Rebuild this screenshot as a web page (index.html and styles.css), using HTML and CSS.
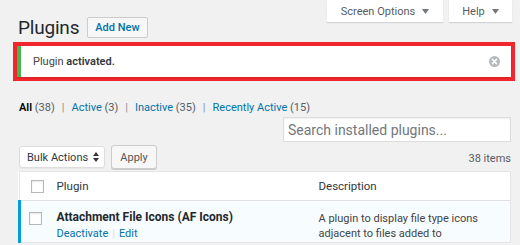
FILE: index.html
```html
<!DOCTYPE html>
<html lang="en">
<head>
<meta charset="utf-8">
<title>Plugins</title>
<link rel="stylesheet" href="styles.css">
</head>
<body>
<div class="wrap">
  <div class="top">
    <div class="heading">
      <h1 class="title">Plugins</h1>
      <a class="btn-add" href="#">Add New</a>
    </div>
    <div class="screen-meta">
      <button class="meta-tab">Screen Options <svg class="caret" width="7" height="5" viewBox="0 0 7 5"><path d="M0 0h7L3.5 5z" fill="#72777c"/></svg></button>
      <button class="meta-tab">Help <svg class="caret" width="7" height="5" viewBox="0 0 7 5"><path d="M0 0h7L3.5 5z" fill="#72777c"/></svg></button>
    </div>
  </div>

  <div class="highlight">
    <div class="notice">
      <p class="notice-text">Plugin <strong>activated.</strong></p>
      <svg class="dismiss" width="11" height="11" viewBox="0 0 11 11"><circle cx="5.5" cy="5.5" r="5.5" fill="#b4b9be"/><path d="M3.4 3.4l4.2 4.2M7.6 3.4l-4.2 4.2" stroke="#fff" stroke-width="1.6" stroke-linecap="round"/></svg>
    </div>
  </div>

  <ul class="filters">
    <li><a class="current" href="#">All <span class="count">(38)</span></a><span class="sep">|</span></li>
    <li><a href="#">Active <span class="count">(3)</span></a><span class="sep">|</span></li>
    <li><a href="#">Inactive <span class="count">(35)</span></a><span class="sep">|</span></li>
    <li><a href="#">Recently Active <span class="count">(15)</span></a></li>
  </ul>

  <div class="search-row">
    <input class="search" type="search" placeholder="Search installed plugins...">
  </div>

  <div class="tablenav">
    <div class="select">Bulk Actions <svg class="updown" width="6" height="10" viewBox="0 0 6 10"><path d="M0 4h6L3 0zM0 6h6L3 10z" fill="#32373c"/></svg></div>
    <button class="btn-apply">Apply</button>
    <span class="items">38 items</span>
  </div>

  <table class="plugins">
    <thead>
      <tr>
        <td class="cb"><span class="checkbox"></span></td>
        <th class="col-name">Plugin</th>
        <th class="col-desc">Description</th>
      </tr>
    </thead>
    <tbody>
      <tr class="active">
        <td class="cb"><span class="checkbox"></span></td>
        <td class="col-name">
          <strong class="plugin-title">Attachment File Icons (AF Icons)</strong>
          <div class="row-actions"><a href="#">Deactivate</a><span class="bar">|</span><a href="#">Edit</a></div>
        </td>
        <td class="col-desc">A plugin to display file type icons<br>adjacent to files added to</td>
      </tr>
    </tbody>
  </table>
</div>
</body>
</html>
```

FILE: styles.css
```css
* { box-sizing: border-box; }

html, body {
  margin: 0;
  background: #f1f1f1;
  font-family: Roboto, "Liberation Sans", sans-serif;
  font-size: 11px;
  color: #444;
}

.wrap {
  padding: 0 9px 0 18px;
  overflow: hidden;
  height: 245px;
}

.top {
  display: flex;
  justify-content: space-between;
  align-items: flex-start;
}

.heading {
  display: flex;
  align-items: center;
  gap: 8px;
  padding-top: 17px;
  height: 38px;
}

.title {
  margin: 0;
  font-size: 19px;
  font-weight: 400;
  color: #23282d;
  letter-spacing: -0.2px;
  line-height: 21px;
}

.btn-add {
  display: flex;
  align-items: center;
  height: 21px;
  padding: 0 7px;
  background: #f7f7f7;
  border: 1px solid #ccc;
  border-radius: 2px;
  color: #0073aa;
  font-weight: 500;
  font-size: 11px;
  text-decoration: none;
}

.screen-meta {
  display: flex;
  gap: 6px;
  margin-right: -1px;
}

.meta-tab {
  display: flex;
  align-items: center;
  justify-content: center;
  gap: 7px;
  height: 22px;
  background: #fff;
  border: none;
  box-shadow: 0 1px 1px rgba(0,0,0,.12);
  font-family: inherit;
  font-size: 11px;
  color: #555d66;
  padding: 0 13px;
}
.meta-tab:first-child { width: 116px; }
.meta-tab:last-child { width: 63px; }

.caret { display: block; }

.highlight {
  margin: 4px -4px 0 -5px;
  border: 4px solid #f0262c;
}

.notice {
  display: flex;
  align-items: center;
  justify-content: space-between;
  height: 31px;
  background: #fff;
  border-left: 4px solid #46b450;
  box-shadow: 0 1px 1px rgba(0,0,0,.1);
  padding: 0 11px 0 12px;
}

.notice-text { margin: 0; color: #444; }
.notice-text strong { font-weight: 600; color: #32373c; }

.dismiss { display: block; }

.filters {
  list-style: none;
  display: flex;
  margin: 16px 0 0 1px;
  padding: 0;
  height: 20px;
  align-items: center;
  color: #555d66;
}
.filters a { color: #0073aa; text-decoration: none; }
.filters a.current { color: #000; font-weight: 600; }
.filters a.current .count { font-weight: 400; color: #555d66; }
.filters .count { color: #555d66; }
.sep { margin: 0 7px; color: #8c8f94; }

.search-row {
  display: flex;
  justify-content: flex-end;
}

.search {
  width: 228px;
  height: 25px;
  border: 1px solid #ddd;
  background: #fff;
  box-shadow: inset 0 1px 2px rgba(0,0,0,.07);
  font-family: inherit;
  font-size: 14px;
  padding: 0 4px;
  outline: none;
}
.search::placeholder { color: #72777c; }

.tablenav {
  display: flex;
  align-items: center;
  margin-top: 3px;
  height: 24px;
  padding-left: 1px;
}

.select {
  display: flex;
  align-items: center;
  justify-content: space-between;
  width: 86px;
  height: 22px;
  padding: 0 5px 0 7px;
  background: #fff;
  border: 1px solid #ddd;
  border-radius: 3px;
  color: #32373c;
  box-shadow: 0 1px 1px rgba(0,0,0,.04);
}
.updown { display: block; }

.btn-apply {
  margin-left: 6px;
  height: 24px;
  width: 46px;
  background: #f7f7f7;
  border: 1px solid #ccc;
  border-radius: 3px;
  box-shadow: 0 1px 0 #ccc;
  font-family: inherit;
  font-size: 11px;
  color: #555;
  padding: 0;
}

.items {
  margin-left: auto;
  color: #555d66;
  position: relative;
  top: 1px;
}

.plugins {
  margin-top: 2px;
  width: 100%;
  border-collapse: collapse;
  background: #fff;
  border: 1px solid #e5e5e5;
  table-layout: fixed;
}

.plugins th, .plugins td {
  text-align: left;
  vertical-align: top;
  padding: 0;
}

.plugins thead th, .plugins thead td {
  height: 29px;
  border-bottom: 1px solid #e1e1e1;
  vertical-align: middle;
  font-weight: 400;
  color: #32373c;
  font-size: 11.5px;
}

.plugins .cb { width: 37px; padding-left: 11px; }
.plugins thead .cb { padding-top: 1px; }
.plugins .col-name { width: 252px; }
.plugins .col-desc { padding-left: 10px; }

.checkbox {
  display: block;
  width: 13px;
  height: 13px;
  border: 1px solid #b4b9be;
  background: #fff;
  box-shadow: inset 0 1px 2px rgba(0,0,0,.1);
}

tr.active td { background: #f7fcfe; }
tr.active td.cb {
  border-left: 3px solid #00a0d2;
  padding-left: 8px;
  padding-top: 11px;
}
tbody .col-name { padding-top: 8px; }
tbody .col-desc { padding-top: 10px; line-height: 15px; color: #444; }

.plugin-title {
  display: block;
  font-weight: 700;
  color: #23282d;
  font-size: 12px;
  line-height: 17px;
}

.row-actions {
  margin-top: 0;
  line-height: 16px;
}
.row-actions a { color: #0073aa; text-decoration: none; }
.bar { color: #ddd; margin: 0 4px; }
```
